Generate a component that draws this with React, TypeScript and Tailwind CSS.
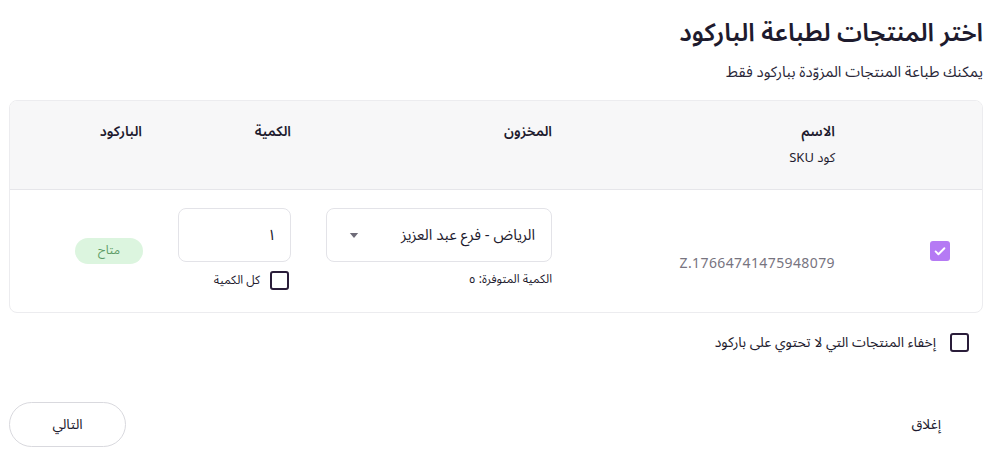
import { useState } from "react";

const FONT = { fontFamily: '"Noto Sans Arabic", "DejaVu Sans", sans-serif' };

function Box({ checked, onClick }: { checked: boolean; onClick: () => void }) {
  return checked ? (
    <button
      onClick={onClick}
      className="flex h-5 w-5 items-center justify-center rounded-[3px] bg-[#b57af4]"
    >
      <svg viewBox="0 0 20 20" className="h-4 w-4" fill="none" stroke="white" strokeWidth="2.4" strokeLinecap="round" strokeLinejoin="round">
        <path d="M4.5 10.5l3.5 3.5 7.5-7.5" />
      </svg>
    </button>
  ) : (
    <button onClick={onClick} className="h-[19px] w-[19px] rounded-[3px] border-2 border-[#2a1d3a] bg-white" />
  );
}

export default function App() {
  const [selected, setSelected] = useState(true);
  const [allQty, setAllQty] = useState(false);
  const [hideNoBarcode, setHideNoBarcode] = useState(false);
  const [qty, setQty] = useState("١");

  return (
    <div dir="rtl" style={FONT} className="h-[466px] w-[994px] bg-white px-[11px] pt-[15px] text-[#1e1b2e]">
      <h1 className="text-[25px] font-semibold leading-[36px]">اختر المنتجات لطباعة الباركود</h1>
      <p className="mt-[10px] text-[15px] leading-[22px] text-[#2a2738]">يمكنك طباعة المنتجات المزوّدة بباركود فقط</p>

      {/* Table */}
      <div className="mt-[17px] ml-[-2px] overflow-hidden rounded-lg border border-[#ececef]">
        <div className="grid grid-cols-[131px_283px_261px_149px_1fr] bg-[#f7f7f8] border-b border-[#e6e6ea] h-[89px] text-[14px] font-semibold">
          <div />
          <div className="pr-[16px] pt-[21px]">
            <div className="leading-[20px]">الاسم</div>
            <div className="mt-[7px] text-[13px] font-normal leading-[18px]">كود SKU</div>
          </div>
          <div className="pr-[16px] pt-[21px] leading-[20px]">المخزون</div>
          <div className="pr-[16px] pt-[21px] leading-[20px]">الكمية</div>
          <div className="pr-[16px] pt-[21px] leading-[20px]">الباركود</div>
        </div>

        <div className="grid grid-cols-[131px_283px_261px_149px_1fr] h-[122px]">
          <div className="flex items-center pr-[32px]">
            <Box checked={selected} onClick={() => setSelected((s) => !s)} />
          </div>
          <div className="flex items-end pr-[16px] pb-[38px]">
            <span dir="ltr" className="text-[14px] tracking-[0.4px] text-[#77747f]">Z.17664741475948079</span>
          </div>
          <div className="pr-[16px] pt-[18px]">
            <div className="flex h-[54px] w-[226px] items-center justify-between rounded-lg border border-[#e3e3e8] px-[16px]">
              <span className="text-[15px]">الرياض - فرع عبد العزيز</span>
              <svg viewBox="0 0 10 6" className="ml-[6px] h-[5px] w-[10px]">
                <path d="M0 0h10L5 6z" fill="#6e6b78" />
              </svg>
            </div>
            <div className="mt-[9px] text-[12px] leading-[18px]">الكمية المتوفرة: ٥</div>
          </div>
          <div className="pr-[16px] pt-[18px]">
            <input
              value={qty}
              onChange={(e) => setQty(e.target.value)}
              style={FONT}
              className="h-[54px] w-[113px] rounded-lg border border-[#e3e3e8] px-[14px] text-[15px] outline-none"
            />
            <label className="mt-[9px] flex items-center gap-[10px] pr-[2px] text-[12px] leading-[18px]">
              <Box checked={allQty} onClick={() => setAllQty((s) => !s)} />
              كل الكمية
            </label>
          </div>
          <div className="flex items-center pr-[15px]">
            <span className="flex h-[26px] w-[68px] items-center justify-center rounded-full bg-[#dcf5df] text-[12px] text-[#5c9b66]">متاح</span>
          </div>
        </div>
      </div>

      <label className="mt-[19px] flex items-center gap-[14px] pr-[14px] text-[14px]">
        <Box checked={hideNoBarcode} onClick={() => setHideNoBarcode((s) => !s)} />
        إخفاء المنتجات التي لا تحتوي على باركود
      </label>

      <div className="mt-[49px] flex items-center justify-between">
        <button className="mr-[42px] text-[14px]">إغلاق</button>
        <button className="ml-[-2px] h-[45px] w-[117px] rounded-full border border-[#d9d9de] text-[14px]">التالي</button>
      </div>
    </div>
  );
}
